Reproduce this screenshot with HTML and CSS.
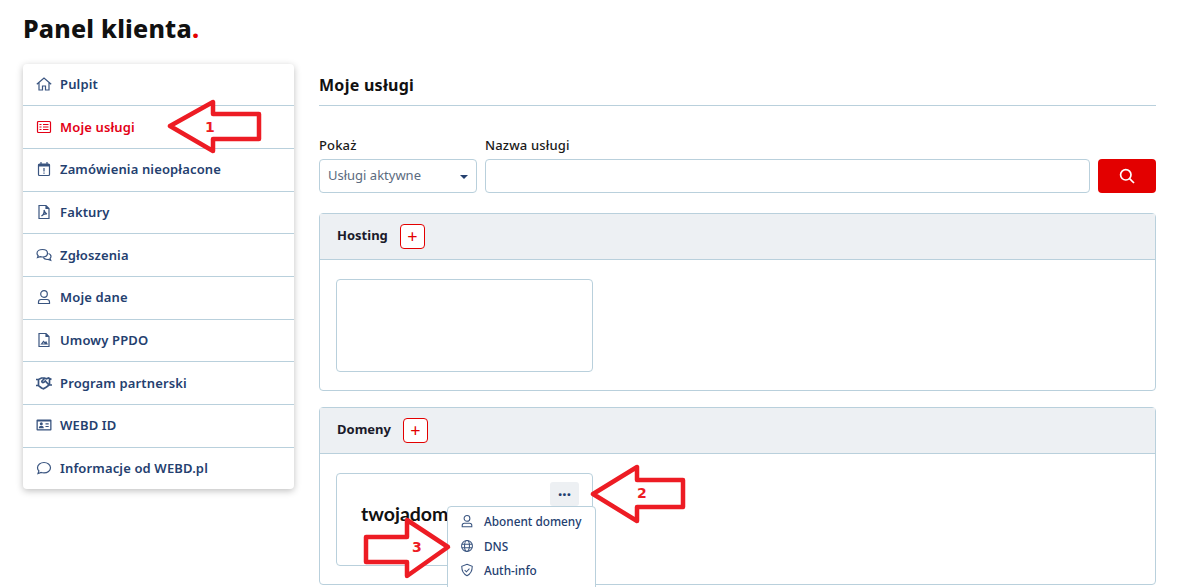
FILE: index.html
```html
<!DOCTYPE html>
<html lang="pl">
<head>
    <meta charset="UTF-8">
    <meta name="viewport" content="width=device-width, initial-scale=1.0">
    <title>Panel klienta</title>
    <link rel="stylesheet" href="styles.css">
</head>
<body>
    <h1 class="page-title">Panel klienta<span class="dot">.</span></h1>

    <div class="layout">
        <ul class="side-menu">
            <li><a href="#">
                <svg class="ico" viewBox="0 0 16 16"><path d="M.8 8.200L8 2l7.200 6.200M3 6.500V14h3.500v-4h3v4H13V6.500"/></svg>
                Pulpit</a></li>
            <li class="active"><a href="#">
                <svg class="ico" viewBox="0 0 16 16"><rect x="1.500" y="2.500" width="13" height="11" rx="1"/><path d="M3.500 5.500h2M7 5.500h5.500M3.500 8h2M7 8h5.500M3.500 10.500h2M7 10.500h5.500"/></svg>
                Moje usługi</a></li>
            <li><a href="#">
                <svg class="ico" viewBox="0 0 16 16"><rect x="2.500" y="3" width="11" height="11.500" rx="1"/><path class="fill" d="M2.500 3h11v2.500h-11z"/><path d="M5 1v3M11 1v3M8 7v3.500M8 11.500v1.300"/></svg>
                Zamówienia nieopłacone</a></li>
            <li><a href="#">
                <svg class="ico" viewBox="0 0 16 16"><path d="M3 1.500h7l3 3V14.500H3zM10 1.500v3h3M5.500 12c2-1 3-4 2.500-6 .5 2 1.500 3.500 3 4-2-.3-4 .5-5.500 2z"/></svg>
                Faktury</a></li>
            <li><a href="#">
                <svg class="ico" viewBox="0 0 16 16"><path d="M6.500 2.500c-3 0-5.500 1.600-5.500 3.800 0 1 .5 1.800 1.200 2.400L1.500 10.500l2.600-.8c.7.200 1.500.3 2.400.3 3 0 5-1.500 5-3.700s-2-3.800-5-3.800z"/><path d="M12.500 6.500c1.500.5 2.500 1.600 2.500 3 0 .8-.4 1.500-1 2l.7 1.800-2.500-.9c-2 .3-4-.3-5-2"/></svg>
                Zgłoszenia</a></li>
            <li><a href="#">
                <svg class="ico" viewBox="0 0 16 16"><circle cx="8" cy="5" r="3.300"/><path d="M2.500 14.500v-1.500c0-1.500 1-2.500 2.500-2.500h6c1.500 0 2.500 1 2.500 2.500v1.500z"/></svg>
                Moje dane</a></li>
            <li><a href="#">
                <svg class="ico" viewBox="0 0 16 16"><path d="M3 1.500h7l3 3V14.500H3zM10 1.500v3h3M5.500 12l2-2.500 1.500 1.500 1-1 1 2z"/></svg>
                Umowy PPDO</a></li>
            <li><a href="#">
                <svg class="ico ico-heavy" viewBox="0 0 16 16"><path d="M0 4.500h2.500l3-1.500h3l2 .8 2-.8 3 1.500M0 10.500h2.500l3 2.500 2 .8 3-1.800 2.500-2H16M2.500 4v6.500M13.500 4v6M8.500 3.500L6 6c-.7 1 .7 2 1.700 1.300L9.300 6l3.700 4"/></svg>
                Program partnerski</a></li>
            <li><a href="#">
                <svg class="ico" viewBox="0 0 16 16"><rect class="fill" x=".5" y="2.500" width="15" height="11" rx="1"/><rect class="hole" x="1.800" y="4.500" width="12.400" height="7.700"/><circle class="fill" cx="5.300" cy="6.800" r="1.500"/><path class="fill" d="M2.800 11.200c0-3.200 5-3.200 5 0z"/><path d="M9.500 6.800h3.200M9.500 9.500h3.200"/></svg>
                WEBD ID</a></li>
            <li><a href="#">
                <svg class="ico" viewBox="0 0 16 16"><path d="M8 2.500c-3.500 0-6.500 2.300-6.500 5.200 0 1.200.5 2.300 1.400 3.200L2 13.500l3.200-1c.9.300 1.800.4 2.800.4 3.500 0 6.500-2.200 6.500-5.200S11.500 2.500 8 2.500z"/></svg>
                Informacje od WEBD.pl</a></li>
        </ul>

        <div class="content">
            <h2 class="section-title">Moje usługi</h2>

            <form class="filters">
                <div class="field field-select">
                    <label>Pokaż</label>
                    <div class="select">Usługi aktywne<span class="caret"></span></div>
                </div>
                <div class="field field-grow">
                    <label>Nazwa usługi</label>
                    <div class="input"></div>
                </div>
                <button class="search-btn" type="button">
                    <svg viewBox="0 0 16 16"><circle cx="6.800" cy="6.800" r="5.200"/><path d="M10.600 10.600l4.400 4.400"/></svg>
                </button>
            </form>

            <section class="panel">
                <div class="panel-head">Hosting <span class="plus">+</span></div>
                <div class="panel-body"><div class="service-card"></div></div>
            </section>

            <section class="panel">
                <div class="panel-head">Domeny <span class="plus">+</span></div>
                <div class="panel-body">
                    <div class="service-card">
                        <span class="more">&middot;&middot;&middot;</span>
                        <div class="domain">twojadomena</div>
                        <ul class="dropdown">
                            <li>
                                <svg class="ico" viewBox="0 0 16 16"><circle cx="8" cy="5" r="3.300"/><path d="M2.500 14.500v-1.500c0-1.500 1-2.500 2.500-2.500h6c1.500 0 2.500 1 2.500 2.500v1.500z"/></svg>
                                Abonent domeny</li>
                            <li>
                                <svg class="ico" viewBox="0 0 16 16"><circle cx="8" cy="8" r="6.200"/><ellipse cx="8" cy="8" rx="2.800" ry="6.200"/><path d="M2 6h12M2 10h12"/></svg>
                                DNS</li>
                            <li>
                                <svg class="ico" viewBox="0 0 16 16"><path d="M8 1.500l6 2.300c0 5-2 9-6 10.700-4-1.700-6-5.700-6-10.700zM5.300 8l2 2 3.500-3.500"/></svg>
                                Auth-info</li>
                        </ul>
                    </div>
                </div>
            </section>
        </div>
    </div>

    <!-- annotations drawn over the screenshot -->
    <svg class="notes" viewBox="0 0 1198 587">
        <polygon points="170,126 213,102 213,114 259,114 259,139 213,139 213,151"/>
        <polygon points="593,494 637,467 637,480 683,480 683,507 637,507 637,521"/>
        <polygon points="448,547 407,520 407,537 366,537 366,562 407,562 407,576"/>
    </svg>
    <span class="note-num n1">1</span>
    <span class="note-num n2">2</span>
    <span class="note-num n3">3</span>
</body>
</html>
```

FILE: styles.css
```css
* {
    box-sizing: border-box;
}

html, body {
    height: 587px;
    overflow: hidden;
}

body {
    margin: 0;
    padding: 0 42px 0 23px;
    background: #fff;
    font-family: 'Noto Sans', sans-serif;
    font-size: 13px;
    color: #111;
}

.page-title {
    margin: 0;
    padding-top: 11px;
    height: 64px;
    font-size: 25px;
    line-height: 34px;
    font-weight: 800;
    letter-spacing: 0.2px;
    color: #111;
}

.page-title .dot {
    color: #e30000;
}

.layout {
    display: flex;
    gap: 25px;
    align-items: flex-start;
}

/* side menu */
.side-menu {
    width: 271px;
    flex: none;
    margin: 0;
    padding: 0;
    list-style: none;
    background: #fff;
    border-radius: 4px;
    box-shadow: 0 2px 7px rgba(0, 0, 0, 0.25);
}

.side-menu li {
    height: 42.700px;
    border-bottom: 1px solid #b9d0dc;
}

.side-menu li:first-child {
    height: 42.200px;
}

.side-menu li:last-child {
    height: 41.500px;
    border-bottom: none;
}

.side-menu a {
    display: flex;
    align-items: center;
    gap: 8px;
    height: 100%;
    padding: 0 0 1px 13px;
    color: #24406f;
    font-weight: 600;
    letter-spacing: 0.14px;
    text-decoration: none;
}

.side-menu .active a {
    color: #e30016;
}

.ico {
    width: 15px;
    height: 15px;
    flex: none;
    fill: none;
    stroke: #3a5580;
    stroke-width: 1.2;
}

.side-menu .ico {
    width: 16px;
    height: 16px;
}

.side-menu .active .ico {
    stroke: #e30016;
}

.ico .fill {
    fill: #3a5580;
    stroke: none;
}

.ico .hole {
    fill: #fff;
    stroke: none;
}

.ico-heavy {
    stroke-width: 1.7;
}

/* main column */
.content {
    flex: 1;
}

.section-title {
    margin: 0 0 29px;
    height: 42px;
    padding-top: 8px;
    font-size: 16px;
    line-height: 26px;
    font-weight: 700;
    letter-spacing: 0.27px;
    color: #111;
    border-bottom: 1px solid #b9d0dc;
}

.filters {
    display: flex;
    align-items: flex-end;
    gap: 8px;
    margin-bottom: 20px;
}

.field label {
    display: block;
    height: 24px;
    line-height: 20px;
    font-weight: 500;
    letter-spacing: 0.15px;
    color: #1a1a1a;
}

.field-select {
    width: 158px;
}

.field-grow {
    flex: 1;
}

.select, .input {
    height: 34px;
    border: 1px solid #b9d0dc;
    border-radius: 4px;
    background: #fff;
}

.select {
    display: flex;
    align-items: center;
    justify-content: space-between;
    padding: 0 8px 2px;
    color: #5b6b80;
}

.caret {
    width: 0;
    height: 0;
    margin-top: 3px;
    border-left: 4px solid transparent;
    border-right: 4px solid transparent;
    border-top: 4px solid #24406f;
}

.search-btn {
    width: 58px;
    height: 34px;
    border: none;
    border-radius: 4px;
    background: #e30000;
    display: flex;
    align-items: center;
    justify-content: center;
    padding: 0;
}

.search-btn svg {
    width: 16px;
    height: 16px;
    fill: none;
    stroke: #fff;
    stroke-width: 1.7;
}

/* panels */
.panel {
    border: 1px solid #b9d0dc;
    border-radius: 4px;
    margin-bottom: 16px;
}

.panel-head {
    display: flex;
    align-items: center;
    gap: 12px;
    height: 46px;
    padding: 0 0 4px 17px;
    background: #edf0f3;
    border-bottom: 1px solid #b9d0dc;
    font-weight: 700;
    color: #1a1a2a;
}

.plus {
    width: 25px;
    height: 25px;
    margin-top: 3px;
    border: 1px solid #e30000;
    border-radius: 4px;
    background: #fff;
    color: #e30000;
    font-size: 18px;
    font-weight: 400;
    line-height: 23px;
    text-align: center;
}

.panel-body {
    padding: 19px 16px 18px;
}

.service-card {
    position: relative;
    width: 257px;
    height: 93px;
    border: 1px solid #b9d0dc;
    border-radius: 4px;
    background: #fff;
}

.more {
    position: absolute;
    top: 8px;
    right: 13px;
    width: 29px;
    height: 24px;
    border-radius: 3px;
    background: #edf0f3;
    color: #24406f;
    font-size: 15px;
    font-weight: 800;
    line-height: 24px;
    text-align: center;
}

.domain {
    padding: 28px 0 0 24px;
    font-family: Lato, sans-serif;
    font-size: 19.500px;
    line-height: 24px;
    font-weight: 700;
    color: #111;
}

.dropdown {
    position: absolute;
    top: 32px;
    left: 110px;
    width: 149px;
    margin: 0;
    padding: 2px 0 0 12px;
    height: 90px;
    list-style: none;
    background: #fff;
    border: 1px solid #b9d0dc;
    border-radius: 4px;
    font-size: 11.800px;
    font-weight: 500;
    color: #24406f;
}

.dropdown li {
    display: flex;
    align-items: center;
    gap: 10px;
    height: 24.500px;
}

.dropdown .ico {
    width: 14px;
    height: 14px;
}

/* red arrows and numbers */
.notes {
    position: absolute;
    left: 0;
    top: 0;
    width: 1198px;
    height: 587px;
    pointer-events: none;
}

.notes polygon {
    fill: #fff;
    stroke: #ed1c24;
    stroke-width: 4.500;
    stroke-linejoin: round;
}

.note-num {
    position: absolute;
    font-family: 'DejaVu Sans', sans-serif;
    font-size: 14px;
    font-weight: 700;
    line-height: 16px;
    color: #ed1c24;
}

.n1 { left: 205px; top: 119px; }
.n2 { left: 637px; top: 485px; }
.n3 { left: 412px; top: 539px; }
```
